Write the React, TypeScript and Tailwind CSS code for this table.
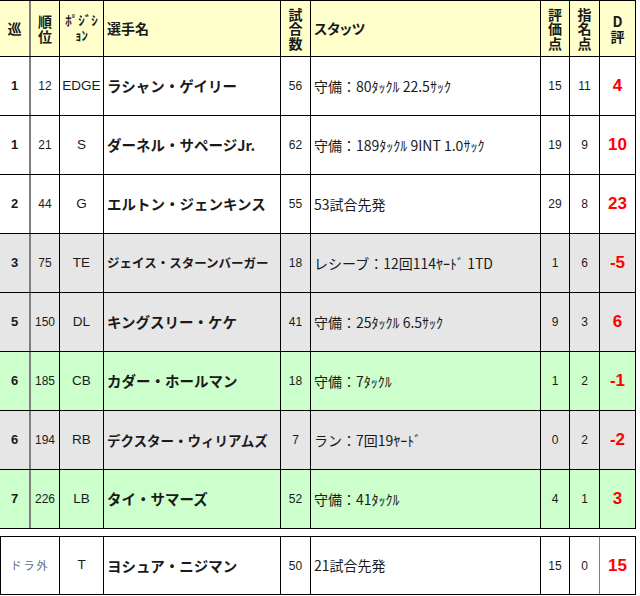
import React from "react";

type R = {
  round: string;
  pick: string;
  pos: string;
  name: string;
  ns: string;
  games: string;
  stats: string;
  ev: string;
  nom: string;
  d: string;
  bg: string;
};

const rows: R[] = [
  { round: "1", pick: "12", pos: "EDGE", name: "ラシャン・ゲイリー", ns: "text-[14.5px]", games: "56", stats: "守備：80ﾀｯｸﾙ 22.5ｻｯｸ", ev: "15", nom: "11", d: "4", bg: "bg-white" },
  { round: "1", pick: "21", pos: "S", name: "ダーネル・サページJr.", ns: "text-[14.5px]", games: "62", stats: "守備：189ﾀｯｸﾙ 9INT 1.0ｻｯｸ", ev: "19", nom: "9", d: "10", bg: "bg-white" },
  { round: "2", pick: "44", pos: "G", name: "エルトン・ジェンキンス", ns: "text-[14.5px]", games: "55", stats: "53試合先発", ev: "29", nom: "8", d: "23", bg: "bg-white" },
  { round: "3", pick: "75", pos: "TE", name: "ジェイス・スターンバーガー", ns: "text-[12.5px]", games: "18", stats: "レシーブ：12回114ﾔｰﾄﾞ 1TD", ev: "1", nom: "6", d: "-5", bg: "bg-[#e6e6e6]" },
  { round: "5", pick: "150", pos: "DL", name: "キングスリー・ケケ", ns: "text-[14.5px]", games: "41", stats: "守備：25ﾀｯｸﾙ 6.5ｻｯｸ", ev: "9", nom: "3", d: "6", bg: "bg-[#e6e6e6]" },
  { round: "6", pick: "185", pos: "CB", name: "カダー・ホールマン", ns: "text-[14.5px]", games: "18", stats: "守備：7ﾀｯｸﾙ", ev: "1", nom: "2", d: "-1", bg: "bg-[#ccffcc]" },
  { round: "6", pick: "194", pos: "RB", name: "デクスター・ウィリアムズ", ns: "text-[13.5px]", games: "7", stats: "ラン：7回19ﾔｰﾄﾞ", ev: "0", nom: "2", d: "-2", bg: "bg-[#e6e6e6]" },
  { round: "7", pick: "226", pos: "LB", name: "タイ・サマーズ", ns: "text-[14.5px]", games: "52", stats: "守備：41ﾀｯｸﾙ", ev: "4", nom: "1", d: "3", bg: "bg-[#ccffcc]" },
];

const font = "[font-family:'Liberation_Sans','Noto_Sans_CJK_JP',sans-serif]";
const cjk = "[font-family:'Noto_Sans_CJK_JP',sans-serif]";

function Stack({ chars }: { chars: string[] }) {
  return (
    <div className="flex flex-col items-center leading-[14.5px]">
      {chars.map((c, i) => (
        <span key={i}>{c}</span>
      ))}
    </div>
  );
}

function Row({ r }: { r: R }) {
  return (
    <div className={`flex h-[59px] border-b border-black text-[#1a1a1a] ${r.bg}`}>
      <div className="w-[31px] shrink-0 border-r-2 border-[#7f7f7f] flex items-center justify-center font-bold text-[13px]">{r.round}</div>
      <div className="w-[29px] shrink-0 border-r border-black flex items-center justify-center text-[12px]">{r.pick}</div>
      <div className="w-[44px] shrink-0 border-r border-black flex items-center justify-center text-[13.5px]">{r.pos}</div>
      <div className={`w-[177px] shrink-0 border-r border-black flex items-center pl-[3px] font-bold whitespace-nowrap overflow-hidden ${r.ns} ${cjk}`}>{r.name}</div>
      <div className="w-[30px] shrink-0 border-r border-black flex items-center justify-center text-[12px]">{r.games}</div>
      <div className={`w-[230px] shrink-0 border-r border-black flex items-center pl-[3px] text-[14px] whitespace-nowrap ${cjk}`}>{r.stats}</div>
      <div className="w-[29px] shrink-0 border-r border-black flex items-center justify-center text-[12px]">{r.ev}</div>
      <div className="w-[30px] shrink-0 border-r border-black flex items-center justify-center text-[12px]">{r.nom}</div>
      <div className="w-[36px] shrink-0 border-r border-black flex items-center justify-center text-[17px] font-bold text-[#ff0000]">{r.d}</div>
    </div>
  );
}

export default function App() {
  return (
    <div className={`w-[640px] h-[596px] bg-white ${font}`}>
      <div className="w-[636px] border-t border-black">
        <div className={`flex h-[56px] border-b border-black bg-[#ffffcc] font-bold text-[14px] text-[#1a1a1a] ${cjk}`}>
          <div className="w-[31px] shrink-0 border-r-2 border-[#7f7f7f] flex items-center justify-center">巡</div>
          <div className="w-[29px] shrink-0 border-r border-black flex items-center justify-center">
            <Stack chars={["順", "位"]} />
          </div>
          <div className="w-[44px] shrink-0 border-r border-black flex items-center justify-center text-[13px]">
            <div className="flex flex-col items-center leading-[15px] -mt-[3px]">
              <span>ﾎﾟｼﾞｼ</span>
              <span>ｮﾝ</span>
            </div>
          </div>
          <div className="w-[177px] shrink-0 border-r border-black flex items-center pl-[3px]">選手名</div>
          <div className="w-[30px] shrink-0 border-r border-black flex items-center justify-center">
            <Stack chars={["試", "合", "数"]} />
          </div>
          <div className="w-[230px] shrink-0 border-r border-black flex items-center pl-[3px] [font-feature-settings:'palt']">スタッツ</div>
          <div className="w-[29px] shrink-0 border-r border-black flex items-center justify-center">
            <Stack chars={["評", "価", "点"]} />
          </div>
          <div className="w-[30px] shrink-0 border-r border-black flex items-center justify-center">
            <Stack chars={["指", "名", "点"]} />
          </div>
          <div className="w-[36px] shrink-0 border-r border-black flex items-center justify-center">
            <Stack chars={["D", "評"]} />
          </div>
        </div>
        {rows.map((r, i) => (
          <Row key={i} r={r} />
        ))}
      </div>
      <div className="mt-[7px] w-[636px] flex h-[59px] border-t border-b border-l border-black bg-white text-[#1a1a1a]">
        <div className={`w-[59px] shrink-0 border-r border-black flex items-center justify-center text-[11px] tracking-[2px] text-[#5a6a80] ${cjk}`}>ドラ外</div>
        <div className="w-[44px] shrink-0 border-r border-black flex items-center justify-center text-[13.5px]">T</div>
        <div className={`w-[177px] shrink-0 border-r border-black flex items-center pl-[3px] font-bold text-[14.5px] whitespace-nowrap ${cjk}`}>ヨシュア・ニジマン</div>
        <div className="w-[30px] shrink-0 border-r border-black flex items-center justify-center text-[12px]">50</div>
        <div className={`w-[230px] shrink-0 border-r border-black flex items-center pl-[3px] text-[14px] ${cjk}`}>21試合先発</div>
        <div className="w-[29px] shrink-0 border-r border-black flex items-center justify-center text-[12px]">15</div>
        <div className="w-[30px] shrink-0 border-r border-[#7f7f7f] flex items-center justify-center text-[12px]">0</div>
        <div className="w-[36px] shrink-0 border-r border-black flex items-center justify-center text-[17px] font-bold text-[#ff0000]">15</div>
      </div>
    </div>
  );
}
